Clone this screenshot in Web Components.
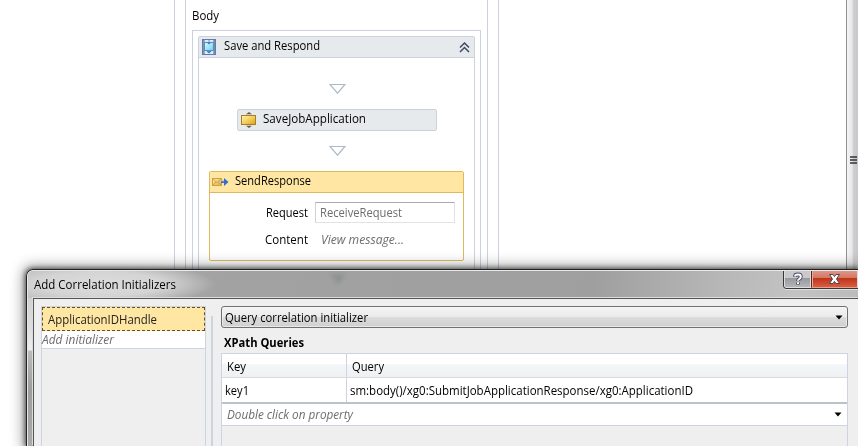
<!DOCTYPE html>
<html lang="en"><head><meta charset="utf-8"><title>Workflow designer</title>
<style>
html,body{margin:0;width:858px;height:446px;overflow:hidden;background:#fff}
body{font:12px/16px "Open Sans","Noto Sans",sans-serif;color:#000;position:relative}
</style></head><body>
<workflow-app></workflow-app>
<script>
const define=(name,html,ready)=>customElements.define(name,class extends HTMLElement{
  constructor(){super();this.attachShadow({mode:'open'}).innerHTML=html}
  connectedCallback(){if(ready)ready(this)}
});

/* A single-line label whose glyph run is condensed to the width in its "w" attribute. */
define('ui-label',`<style>:host{display:block;height:16px;line-height:16px;white-space:nowrap;flex:none}span{display:inline-block;transform-origin:0 50%}</style><span><slot></slot></span>`,el=>{
  const w=+el.getAttribute('w');el.style.width=w+'px';
  const s=el.shadowRoot.querySelector('span');
  s.style.transform=`scaleX(${w/s.getBoundingClientRect().width})`;
});

define('flow-arrow',`<style>:host{display:block;height:10px;width:17px;margin:0 auto}svg{display:block}</style>
<svg width="17" height="10"><path d="M1 .5H16L8.500 9.200Z" fill="#fff" stroke="#aeb8c6" stroke-width="1.200"/></svg>`);

define('icon-sequence',`<style>:host{display:block;width:14px;height:16px;flex:none}svg{display:block}</style>
<svg width="14" height="16"><defs><linearGradient id="a" x2="1"><stop stop-color="#5d76a8"/><stop offset=".3" stop-color="#d4dff5"/><stop offset=".7" stop-color="#c6d4f0"/><stop offset="1" stop-color="#5b729e"/></linearGradient><linearGradient id="b" x2="1" y2="1"><stop stop-color="#dcfcff"/><stop offset="1" stop-color="#66d3e8"/></linearGradient></defs>
<rect x=".5" y=".5" width="13" height="15" fill="url(#a)" stroke="#647ba6"/><rect x="3" y="1" width="8" height="14" fill="#e0e8fa"/><rect x="2.500" y="3.500" width="9" height="8" fill="url(#b)" stroke="#5f8db9"/><path d="M5 3.500H9L7 5.500ZM4.500 12H9.500L7 14.500Z" fill="#3a6fd0"/><path d="M7 1V3M7 11V13" stroke="#7593cf"/></svg>`);

define('icon-activity',`<style>:host{display:block;width:16px;height:16px;flex:none}svg{display:block}</style>
<svg width="16" height="16"><defs><linearGradient id="a" x2="1" y2="1"><stop stop-color="#fff3bd"/><stop offset=".5" stop-color="#f5cf5b"/><stop offset="1" stop-color="#d9a117"/></linearGradient></defs><path d="M5 2.200L8 0L11 2.200ZM5 13.800L8 16L11 13.800Z" fill="#675b45"/><rect x=".5" y="3.500" width="14" height="9" fill="url(#a)" stroke="#a77c2b"/></svg>`);

define('icon-send',`<style>:host{display:block;width:17px;height:10px;flex:none}svg{display:block}</style>
<svg width="17" height="10"><defs><linearGradient id="a" y2="1" x2="1"><stop stop-color="#ffecaa"/><stop offset="1" stop-color="#e2aa35"/></linearGradient></defs><rect x=".5" y="1.500" width="9" height="7" fill="url(#a)" stroke="#d0a044"/><path d="M1 2L5 5.500L9 2M1 8L4 5M9 8L6 5" fill="none" stroke="#c79a45" stroke-width=".8"/><path d="M9 4H12V1L16.500 5L12 9V6H9Z" fill="#356dcc"/><path d="M9 4H12" stroke="#8eb4f2"/></svg>`);

define('sequence-box',`<style>
:host{display:block;box-sizing:border-box;width:277px;height:290px;border:1px solid #cbd2de;border-radius:2px;margin:5px 0 0 5px}
header{display:flex;box-sizing:border-box;height:21px;background:#e6eaed;border-bottom:1px solid #cbd2de;padding:2px 4px 0 3px}
ui-label{margin:-1px auto 0 8px}.chev{margin-top:3px}main{display:block}</style>
<header><icon-sequence></icon-sequence><ui-label w="96">Save and Respond</ui-label><svg class="chev" width="11" height="11"><path d="M1 5.500L5.500 1L10 5.500M1 10L5.500 5.500L10 10" fill="none" stroke="#424a61" stroke-width="1.500"/></svg></header><main><slot></slot></main>`);

define('activity-chip',`<style>:host{display:flex;box-sizing:border-box;width:200px;height:22px;margin:15px 0 15px 38px;border:1px solid #cbd2de;border-radius:2px;background:#e6eaed;padding:2px 3px}ui-label{margin:-1px 0 0 6px}</style><icon-activity></icon-activity><ui-label w="103">SaveJobApplication</ui-label>`);

define('send-card',`<style>
:host{display:block;box-sizing:border-box;width:255px;height:90px;margin:15px 0 0 10px;border:1px solid #dfb95b;border-radius:2px;background:#fff}
header{display:flex;height:20px;background:#ffe6a2;border-bottom:1px solid #dfb95b;padding-left:2px}header icon-send{margin-top:5px}header ui-label{margin:1px 0 0 6px}
.row{display:grid;grid-template-columns:98px 1fr;column-gap:7px;height:21px;align-items:center}.row>ui-label{justify-self:end}
.request{margin-top:9px}.field{box-sizing:border-box;width:140px;height:21px;border:1px solid #dfe3e9;border-top-color:#a9adb0;border-left-color:#cdd1d8;padding:2px 4px;color:#6d6d6d}
.content{margin-top:6px}i{color:#6d6d6d;padding-left:6px}</style>
<header><icon-send></icon-send><ui-label w="76">SendResponse</ui-label></header>
<div class="row request"><ui-label w="42">Request</ui-label><div class="field"><ui-label w="82">ReceiveRequest</ui-label></div></div>
<div class="row content"><ui-label w="43">Content</ui-label><i><ui-label w="83">View message...</ui-label></i></div>`);

define('designer-canvas',`<style>
:host{display:flex;height:446px;justify-content:space-between}
.outer{box-sizing:border-box;width:325px;height:300px;margin-left:174px;border:solid #cbd2de;border-width:0 1px;padding:0 10px;overflow:hidden}
.inner{box-sizing:border-box;height:300px;border:solid #cbd2de;border-width:0 1px;padding:8px 6px 0}
.body{box-sizing:border-box;width:289px;height:290px;border:1px solid #cbd2de;margin-top:6px}
flow-arrow:first-child{margin-top:26px}flow-arrow{margin-left:130px}
aside{box-sizing:border-box;width:12px;border-left:1px solid #929292;background:linear-gradient(90deg,#f4f4f4,#e7e7e9 48%,#cfcfd2 55%,#c7c7ca);padding:156px 0 0 3px}
aside svg{display:block}</style>
<div class="outer"><div class="inner"><ui-label w="27">Body</ui-label><div class="body"><sequence-box><flow-arrow></flow-arrow><activity-chip></activity-chip><flow-arrow></flow-arrow><send-card></send-card></sequence-box></div></div></div>
<aside><svg width="8" height="9"><path d="M0 1H7M0 4H7M0 7H7" stroke="#333" stroke-width="1.600"/></svg></aside>`);

define('title-bar',`<style>
:host{display:flex;height:27px;padding-left:6px;justify-content:space-between;background:radial-gradient(ellipse 115px 22px at 72px 13px,#dcdcdc 0,#d4d4d4 55%,#d4d4d400 100%),linear-gradient(100deg,#bbb 0,#a2a2a2 190px,#9f9f9f 560px,#b8b8b8 690px,#c3c3c3 760px,#bbb)}
.title{margin-top:6px}.ghost{filter:blur(2px);opacity:.4;margin:2px auto 0 152px}
.controls{display:flex;width:75px;height:18px;box-sizing:border-box;border:solid #363638;border-width:0 0 1px 1px;border-bottom-left-radius:4px;overflow:hidden;box-shadow:0 1px #e1e1e1}
.help,.close{display:flex;flex:none;justify-content:center;align-items:center;box-sizing:border-box;border:1px solid #ddd;border-top:0}.help{width:27px;background:linear-gradient(#c9c9cb 45%,#98999d 46%,#b5b6b8)}.close{width:47px;border-left:1px solid #5d2720;box-shadow:inset 1px 0 #eaa99d;background:linear-gradient(#df9688 0,#d57561 44%,#bf3519 46%,#d85d42);border-bottom-color:#e5a190}</style>
<ui-label class="title" w="142">Add Correlation Initializers</ui-label><svg class="ghost" width="20" height="14"><path d="M2 1H18L10 12Z" fill="#747b80"/></svg>
<div class="controls"><div class="help"><svg width="12" height="14"><path d="M3.200 5V3.500Q3.500 2.500 6 2.500Q8.800 2.500 8.800 4.700Q8.800 6 7.200 7Q6 7.700 6 9M6 10.500V12.500" stroke="#4b4d63" stroke-width="3.800" fill="none"/><path d="M3.200 4.500V3.500Q3.500 2.500 6 2.500Q8.800 2.500 8.800 4.700Q8.800 6 7.200 7Q6 7.700 6 8.700M6 10.200V12" stroke="#fff" stroke-width="2" fill="none"/></svg></div><div class="close"><svg width="13" height="12"><path d="M1.500 1.500H5L6.500 3.600L8 1.500H11.500L8.500 6L11.500 10.500H8L6.500 8.400L5 10.500H1.500L4.500 6Z" fill="#fff" stroke="#4f4652"/></svg></div></div>`);

define('initializer-list',`<style>
:host{display:block;box-sizing:border-box;width:165px;height:140px;border:1px solid #ccd3e1;border-bottom:0;margin:7px 0 0 7px}
.selected{box-sizing:border-box;height:24px;border:1px dashed #67511d;background:#ffe6a2;padding:4px 0 0 5px;color:#222}
.add{height:17px;background:#fff;border-bottom:1px solid #ccd3e1;color:#6d6d6d;font-style:italic}.add ui-label{height:17px;line-height:17px}</style>
<div class="selected"><ui-label w="109">ApplicationIDHandle</ui-label></div><div class="add"><ui-label w="72">Add initializer</ui-label></div>`);

define('combo-box',`<style>:host{display:flex;box-sizing:border-box;width:627px;height:22px;border:1px solid #707070;border-radius:3px;background:linear-gradient(#f4f4f4,#ebebeb 48%,#dcdcdc 50%,#cfcfcf);box-shadow:inset 0 0 0 1px #f7f7f7a0;padding:3px 4px 0 3px;justify-content:space-between}svg{margin-top:5px}</style><ui-label w="143">Query correlation initializer</ui-label><svg width="8" height="5"><path d="M.5 .5H7.500L4 4.500Z"/></svg>`);

define('query-table',`<style>
:host{display:block;box-sizing:border-box;width:627px;height:93px;border:1px solid #ccd3e1;border-bottom:0}
.r{display:grid;grid-template-columns:124px 1fr;background:#fff}.r>div+div{border-left:1px solid #ccd3e1}
.head{height:23px;border-bottom:1px solid #d8dbe2;background:linear-gradient(#fff 44%,#f5f6f7 46%,#eff0f2)}.head>div{padding:5px 0 0 5px}
.data{height:24px;border-bottom:2px solid #bcc2c8}.data>div{padding:5px 0 0 3px}
.add{box-sizing:border-box;display:flex;justify-content:space-between;height:22px;background:#fff;border-bottom:1px solid #ccd3e1;padding:3px 5px 0;color:#6d6d6d;font-style:italic}.add svg{margin-top:5px}</style>
<div class="r head"><div><ui-label w="19">Key</ui-label></div><div><ui-label w="32">Query</ui-label></div></div>
<div class="r data"><div><ui-label w="24">key1</ui-label></div><div><ui-label w="343">sm:body()/xg0:SubmitJobApplicationResponse/xg0:ApplicationID</ui-label></div></div>
<div class="add"><ui-label w="126">Double click on property</ui-label><svg width="8" height="5"><path d="M.5 .5H7.500L4 4.500Z" fill="#000"/></svg></div>`);

define('correlation-dialog',`<style>
:host{display:block;position:absolute;left:26px;top:269px;width:832px;height:177px;box-sizing:border-box;border:solid #222;border-width:1px 0 0 1px;border-radius:7px 0 0;background:linear-gradient(#c5c5c5,#ddd 58px,#eee 80px,#bbb 81px,#9d9d9d 120px,#aaa);box-shadow:0 0 5px 1px #0009,0 0 13px 4px #0005;overflow:hidden}
.edge{border:solid #e8e8e8;border-width:1px 0 0 1px;border-radius:6px 0 0;height:176px;overflow:hidden;box-sizing:border-box}
.client{display:flex;margin-left:5px;height:148px;box-sizing:border-box;border:solid #555;border-width:1px 0 0 1px;background:#efefef;box-shadow:-1px -1px #ddd}
.split{width:2px;flex:none;background:#ccd3e1;margin:17px 8px 0 5px}.right{padding-top:7px}.heading{font-weight:700;margin:7px 0 2px 3px}</style>
<div class="edge"><title-bar></title-bar><div class="client"><initializer-list></initializer-list><div class="split"></div><div class="right"><combo-box></combo-box><ui-label class="heading" w="80">XPath Queries</ui-label><query-table></query-table></div></div></div>`);

define('workflow-app',`<style>:host{display:block;width:858px;height:446px;overflow:hidden}</style><designer-canvas></designer-canvas><correlation-dialog></correlation-dialog>`);
</script></body></html>
